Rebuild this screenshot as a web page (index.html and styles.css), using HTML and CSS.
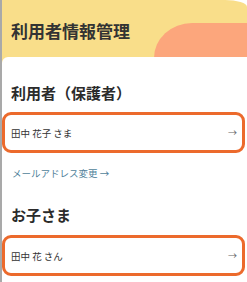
FILE: index.html
```html
<!DOCTYPE html>
<html lang="ja">

<head>
    <meta charset="UTF-8">
    <meta name="viewport" content="width=device-width, initial-scale=1.0">
    <title>利用者情報管理</title>
    <link rel="stylesheet" href="styles.css">
</head>

<body>
    <div class="page">
        <div class="head">
            <div class="blob"></div>
            <h1 class="title">利用者情報管理</h1>
        </div>
        <div class="card">
            <h2 class="sub">利用者（保護者）</h2>
            <a href="" class="row">
                <span class="name">田中 花子 さま</span>
                <span class="go">→</span>
            </a>
            <a href="" class="mail">メールアドレス変更 →</a>
            <h2 class="sub kids">お子さま</h2>
            <a href="" class="row">
                <span class="name">田中 花 さん</span>
                <span class="go">→</span>
            </a>
        </div>
    </div>
</body>

</html>
```

FILE: styles.css
```css
body {
    margin: 0;
    padding: 0;
    background-color: #fff;
    font-family: "Noto Sans CJK JP", "Noto Sans", sans-serif;
    color: #333;
}

.page {
    width: 245px;
    height: 282px;
    border-left: 2px solid #a9a9a9;
    overflow: hidden;
}

.head {
    position: relative;
    height: 64px;
    background-color: #f9de8a;
    border-top-right-radius: 22px 7px;
    overflow: hidden;
}

.blob {
    position: absolute;
    left: 152px;
    top: 23px;
    width: 130px;
    height: 70px;
    border-top-left-radius: 38px 35px;
    background-color: #fca67c;
}

.title {
    position: relative;
    margin: 0;
    padding: 21px 0 0 9px;
    font-size: 17px;
    line-height: 20px;
    font-weight: 700;
    color: #333;
}

.card {
    position: relative;
    margin-top: -7px;
    padding-top: 26px;
    height: 260px;
    background-color: #fff;
    border-top-left-radius: 6px;
}

.sub {
    margin: 0 0 9px 9px;
    font-size: 15px;
    line-height: 20px;
    font-weight: 700;
    color: #2b2b2b;
}

.kids {
    margin-bottom: 10px;
}

.row {
    display: flex;
    align-items: center;
    justify-content: space-between;
    box-sizing: border-box;
    height: 41px;
    margin-right: 2px;
    padding: 0 5px 0 6px;
    border: 3px solid #ec6a2c;
    border-radius: 9px;
    text-decoration: none;
}

.name {
    font-size: 9.5px;
    color: #333;
}

.go {
    font-size: 9px;
    color: #666;
}

.mail {
    display: block;
    margin: 13px 0 25px 10px;
    font-size: 9.5px;
    line-height: 14px;
    color: #4f7f9a;
    text-decoration: none;
}
```
